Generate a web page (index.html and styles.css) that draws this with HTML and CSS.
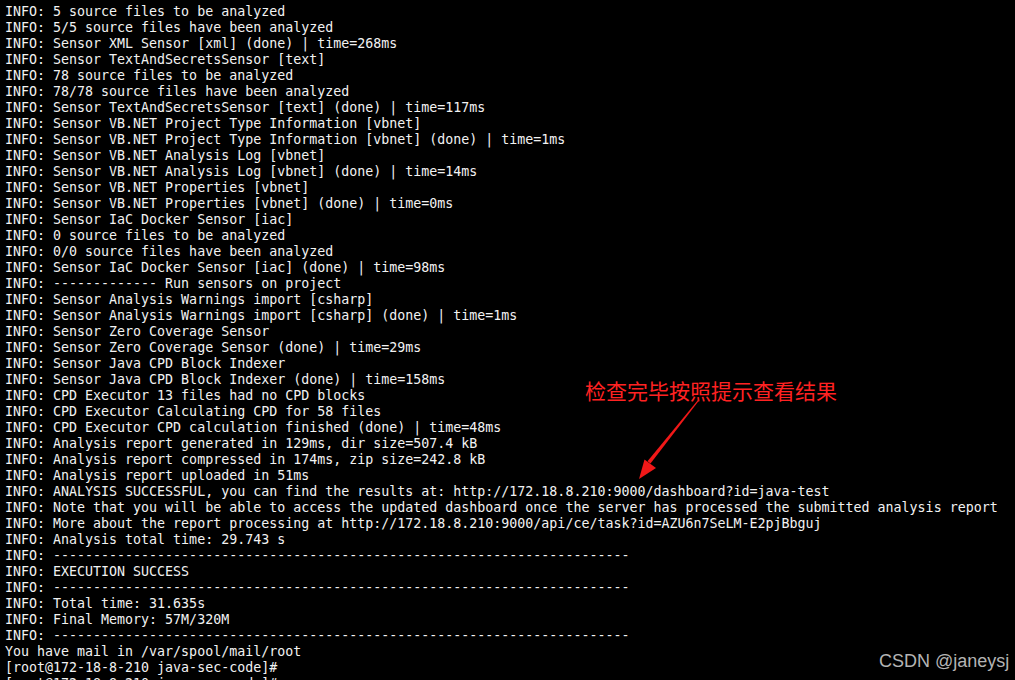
FILE: index.html
```html
<!DOCTYPE html>
<html>
<head>
<meta charset="utf-8">
<link rel="stylesheet" href="styles.css">
</head>
<body>
<div class="term">
<pre class="log">INFO: 5 source files to be analyzed
INFO: 5/5 source files have been analyzed
INFO: Sensor XML Sensor [xml] (done) | time=268ms
INFO: Sensor TextAndSecretsSensor [text]
INFO: 78 source files to be analyzed
INFO: 78/78 source files have been analyzed
INFO: Sensor TextAndSecretsSensor [text] (done) | time=117ms
INFO: Sensor VB.NET Project Type Information [vbnet]
INFO: Sensor VB.NET Project Type Information [vbnet] (done) | time=1ms
INFO: Sensor VB.NET Analysis Log [vbnet]
INFO: Sensor VB.NET Analysis Log [vbnet] (done) | time=14ms
INFO: Sensor VB.NET Properties [vbnet]
INFO: Sensor VB.NET Properties [vbnet] (done) | time=0ms
INFO: Sensor IaC Docker Sensor [iac]
INFO: 0 source files to be analyzed
INFO: 0/0 source files have been analyzed
INFO: Sensor IaC Docker Sensor [iac] (done) | time=98ms
INFO: ------------- Run sensors on project
INFO: Sensor Analysis Warnings import [csharp]
INFO: Sensor Analysis Warnings import [csharp] (done) | time=1ms
INFO: Sensor Zero Coverage Sensor
INFO: Sensor Zero Coverage Sensor (done) | time=29ms
INFO: Sensor Java CPD Block Indexer
INFO: Sensor Java CPD Block Indexer (done) | time=158ms
INFO: CPD Executor 13 files had no CPD blocks
INFO: CPD Executor Calculating CPD for 58 files
INFO: CPD Executor CPD calculation finished (done) | time=48ms
INFO: Analysis report generated in 129ms, dir size=507.4 kB
INFO: Analysis report compressed in 174ms, zip size=242.8 kB
INFO: Analysis report uploaded in 51ms
INFO: ANALYSIS SUCCESSFUL, you can find the results at: http://172.18.8.210:9000/dashboard?id=java-test
INFO: Note that you will be able to access the updated dashboard once the server has processed the submitted analysis report
INFO: More about the report processing at http://172.18.8.210:9000/api/ce/task?id=AZU6n7SeLM-E2pjBbguj
INFO: Analysis total time: 29.743 s
INFO: ------------------------------------------------------------------------
INFO: EXECUTION SUCCESS
INFO: ------------------------------------------------------------------------
INFO: Total time: 31.635s
INFO: Final Memory: 57M/320M
INFO: ------------------------------------------------------------------------
You have mail in /var/spool/mail/root
[root@172-18-8-210 java-sec-code]#
[root@172-18-8-210 java-sec-code]#</pre>
<div class="note">检查完毕按照提示查看结果</div>
<svg class="arrow" width="1015" height="680" viewBox="0 0 1015 680">
  <polygon points="698.6,399.3 699.4,399.9 650.5,463.5 647.5,461.3" fill="#f01818"/>
  <polygon points="639,479 644.5,459.5 656,468" fill="#f01818"/>
</svg>
<div class="mark">CSDN @janeysj</div>
</div>
</body>
</html>
```
FILE: styles.css
```css
html, body {
  margin: 0;
  padding: 0;
  background: #000;
  overflow: hidden;
}
.term {
  position: relative;
  width: 1015px;
  height: 680px;
  overflow: hidden;
  background: #000;
}
.log {
  margin: 0;
  padding: 4px 0 0 5px;
  font-family: "DejaVu Sans Mono", monospace;
  font-size: 13.3px;
  line-height: 16px;
  color: #f2f2f2;
  white-space: pre;
}
.note {
  position: absolute;
  left: 585px;
  top: 378px;
  font-family: "Noto Sans CJK SC", sans-serif;
  font-size: 21px;
  line-height: 24px;
  color: #ff2222;
}
.arrow {
  position: absolute;
  left: 0;
  top: 0;
}
.mark {
  position: absolute;
  left: 879px;
  top: 650px;
  font-family: "Liberation Sans", Arial, sans-serif;
  font-size: 18px;
  line-height: 22px;
  color: #b4b4b4;
}
```
